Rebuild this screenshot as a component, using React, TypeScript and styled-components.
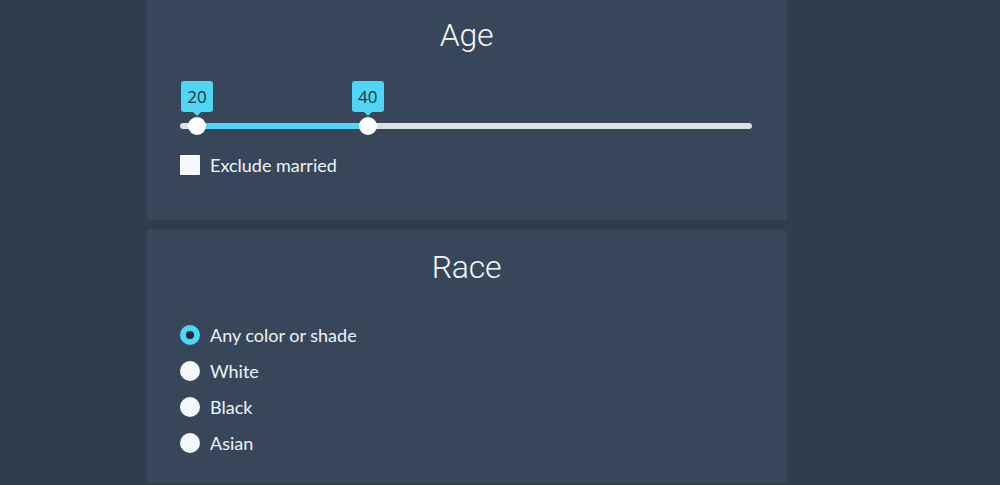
import React from 'react';
import styled, { createGlobalStyle } from 'styled-components';

const GlobalStyle = createGlobalStyle`
	html, body {
		margin: 0;
		padding: 0;
		background: #2f3d4e;
		font-family: Lato, 'Open Sans', sans-serif;
		overflow: hidden;
	}
`;

const Page = styled.div`
	width: 1000px;
	height: 485px;
	display: flex;
	flex-direction: column;
	align-items: flex-start;
	gap: 10px;
	margin-top: -2px;
	padding-left: 146px;
	box-sizing: border-box;
`;

const Panel = styled.section<{ $grow?: boolean }>`
	width: 641px;
	box-sizing: border-box;
	background: #374759;
	border-radius: 4px;
	padding: 19px 34px 0;
	height: ${(p) => (p.$grow ? '300px' : '222px')};
	flex-shrink: 0;
`;

const Title = styled.h2`
	margin: 0;
	font-family: Roboto, sans-serif;
	font-weight: 300;
	font-size: 32px;
	line-height: 37px;
	color: #f3f7fb;
	text-align: center;
	letter-spacing: -0.3px;
`;

const SliderBox = styled.div`
	position: relative;
	width: 572px;
	margin-top: 27px;
	padding-top: 42px;
	padding-bottom: 6px;
`;

const Track = styled.div`
	position: relative;
	height: 6px;
	border-radius: 3px;
	background: #dce1e6;
`;

const Range = styled.div`
	position: absolute;
	top: 0;
	bottom: 0;
	background: #4fd6f7;
`;

const Handle = styled.div`
	position: absolute;
	top: 0;
	width: 32px;
	margin-left: -16px;
	display: flex;
	flex-direction: column;
	align-items: center;
	gap: 5px;
`;

const Thumb = styled.div`
	width: 18px;
	height: 18px;
	border-radius: 50%;
	background: #ffffff;
`;

const Bubble = styled.div`
	position: relative;
	width: 32px;
	height: 31px;
	border-radius: 3px;
	background: #4fd6f7;
	color: #23303d;
	font-family: 'Open Sans', sans-serif;
	font-size: 17px;
	line-height: 31px;
	text-align: center;

	&::after {
		content: '';
		position: absolute;
		left: 50%;
		bottom: -4px;
		margin-left: -4px;
		border-left: 4px solid transparent;
		border-right: 4px solid transparent;
		border-top: 4px solid #4fd6f7;
	}
`;

const Option = styled.label`
	display: flex;
	align-items: center;
	gap: 10px;
	height: 36px;
	font-size: 18px;
	color: #eef3f8;
`;

const Box = styled.span`
	width: 20px;
	height: 20px;
	border-radius: 1px;
	background: #f6f9fc;
`;

const Dot = styled.span<{ $on?: boolean }>`
	width: 20px;
	height: 20px;
	box-sizing: border-box;
	border-radius: 50%;
	background: ${(p) => (p.$on ? '#1d2935' : '#f6f9fc')};
	border: ${(p) => (p.$on ? '6px solid #4fd6f7' : 'none')};
`;

const CheckRow = styled.div`
	margin-top: 12px;
`;

const RadioList = styled.div`
	margin-top: 31px;
	display: flex;
	flex-direction: column;
`;

const MIN = 18;
const MAX = 85;
const pct = (v: number) => ((v - MIN) / (MAX - MIN)) * 100 + '%';

export default function App() {
	const values = [20, 40];
	const races = ['Any color or shade', 'White', 'Black', 'Asian'];

	return (
		<>
			<GlobalStyle />
			<Page>
				<Panel>
					<Title>Age</Title>
					<SliderBox>
						<Track>
							<Range
								style={{
									left: pct(values[0]),
									width: `calc(${pct(values[1])} - ${pct(values[0])})`,
								}}
							/>
						</Track>
						{values.map((v) => (
							<Handle key={v} style={{ left: pct(v) }}>
								<Bubble>{v}</Bubble>
								<Thumb />
							</Handle>
						))}
					</SliderBox>
					<CheckRow>
						<Option>
							<Box />
							Exclude married
						</Option>
					</CheckRow>
				</Panel>
				<Panel $grow>
					<Title>Race</Title>
					<RadioList>
						{races.map((r, i) => (
							<Option key={r}>
								<Dot $on={i === 0} />
								{r}
							</Option>
						))}
					</RadioList>
				</Panel>
			</Page>
		</>
	);
}
